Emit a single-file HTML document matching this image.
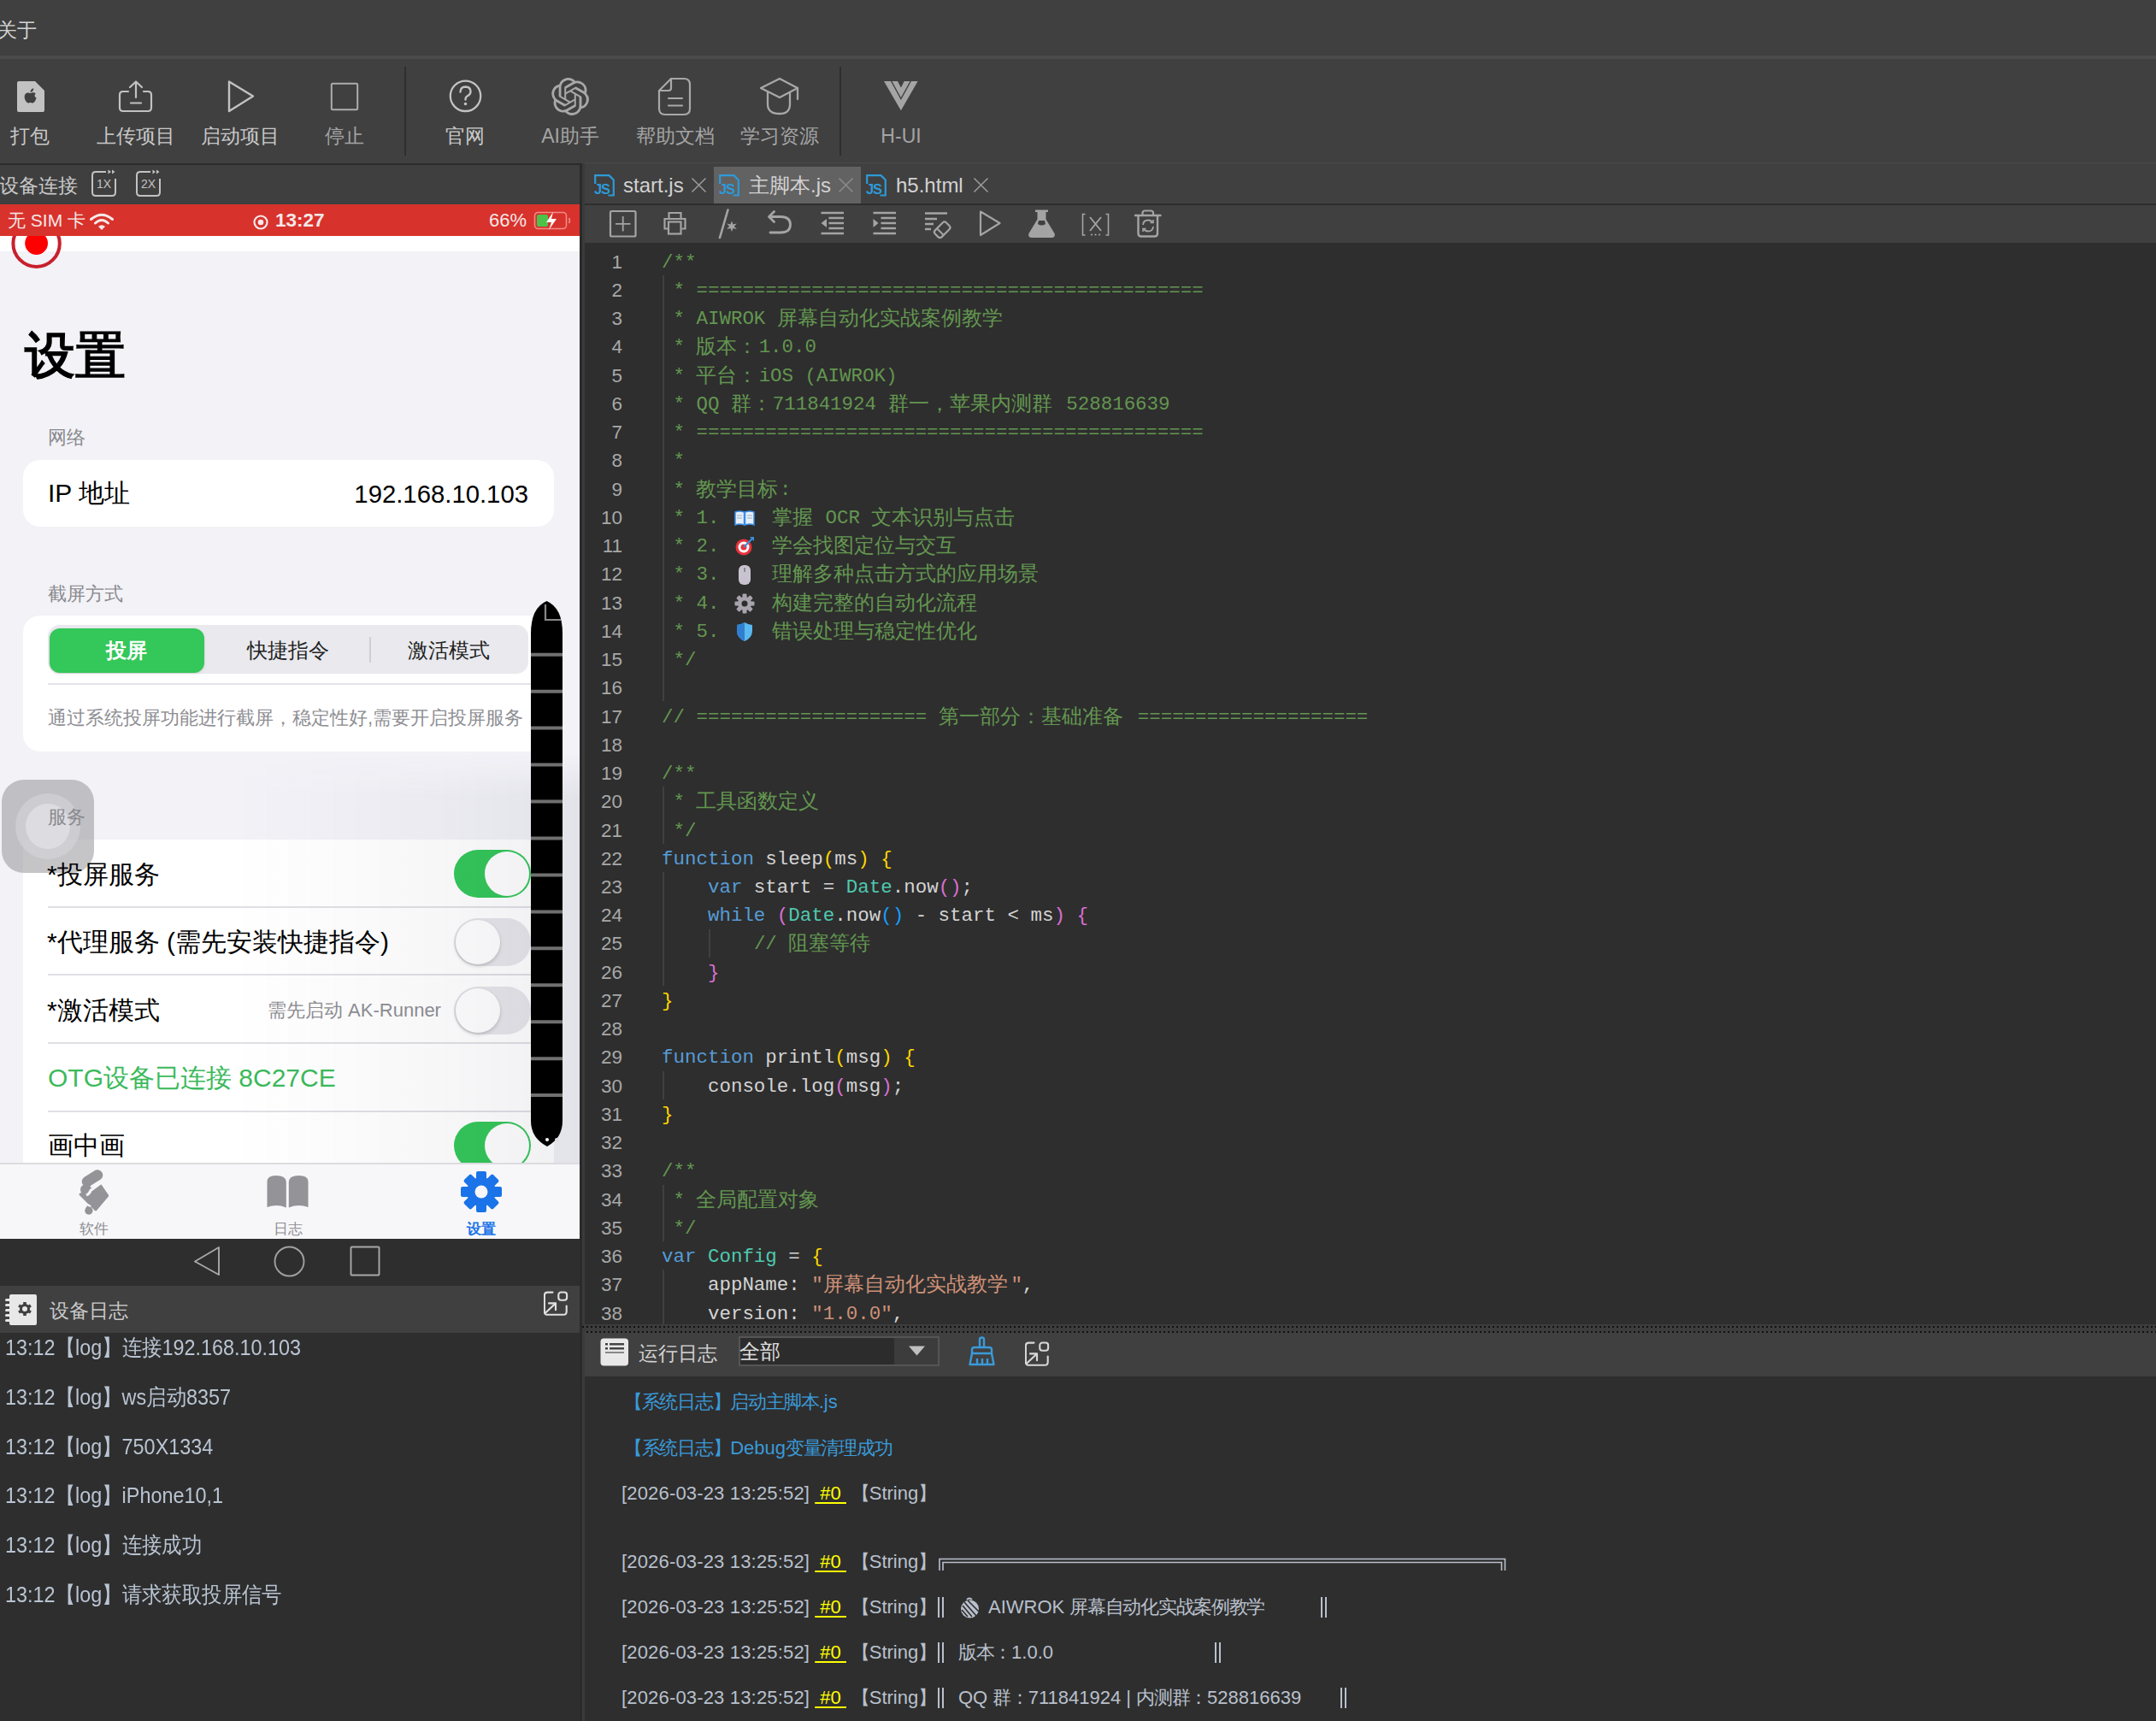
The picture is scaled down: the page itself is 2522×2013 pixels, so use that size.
<!DOCTYPE html>
<html><head><meta charset="utf-8">
<style>
*{margin:0;padding:0;box-sizing:border-box}
html,body{width:2522px;height:2013px;overflow:hidden;background:#404040;font-family:"Liberation Sans",sans-serif}
.a{position:absolute}
#menubar{left:0;top:0;width:2522px;height:65px;background:#404040}
#menuline{left:0;top:65px;width:2522px;height:4px;background:#4a4a4a}
#toolbar{left:0;top:69px;width:2522px;height:121px;background:#404040}
#lefthead{left:0;top:191px;width:681px;height:48px;background:#3f3f3f;border-top:2px solid #2b2b2b}
#phone{left:0;top:239px;width:678px;height:1210px;background:#f2f2f7;overflow:hidden}
#leftsep{left:678px;top:191px;width:3px;height:1822px;background:#2b2b2b}
#leftsep2{left:681px;top:191px;width:3px;height:1822px;background:#3a3a3a}
#navbar{left:0;top:1449px;width:678px;height:55px;background:#2e2e2e}
#devloghead{left:0;top:1504px;width:678px;height:55px;background:#404040}
#devlog{left:0;top:1559px;width:678px;height:454px;background:#2e2e2e}
#tabs{left:684px;top:190px;width:1838px;height:49px;background:#404040;border-top:1px solid #4a4a4a}
#edtool{left:684px;top:240px;width:1838px;height:44px;background:#404040}
#code{left:684px;top:284px;width:1838px;height:1265px;background:#2e2e2e;overflow:hidden}
#splitter{left:684px;top:1549px;width:1838px;height:9px;background:#3c3c3c}
#runhead{left:684px;top:1558px;width:1838px;height:52px;background:#404040}
#runlog{left:684px;top:1610px;width:1838px;height:403px;background:#2e2e2e}
.tl{top:144px;font-size:23px;line-height:30px;transform:translateX(-50%);white-space:nowrap}
.ps{left:56px;font-size:22px;line-height:30px;color:#8a8a8e}
.card{left:27px;width:621px;background:#fff;border-radius:20px}
.pt{font-size:30px;line-height:36px;color:#000;white-space:nowrap}
.sg{top:507px;font-size:24px;line-height:30px;color:#222;transform:translateX(-50%);white-space:nowrap;font-weight:500}
.sep{left:56px;width:600px;height:2px;background:#e0e0e4}
.sw{left:531px;width:90px;height:56px;border-radius:28px;background:#e6e6ea}
.sw i{position:absolute;left:2px;top:2px;width:52px;height:52px;border-radius:50%;background:#fff;box-shadow:0 2px 4px rgba(0,0,0,.18)}
.sw.on{background:#34c759}
.sw.on i{left:auto;right:2px;box-shadow:none}
.tb{top:1188px;font-size:17px;line-height:22px;color:#8e8e93;transform:translateX(-50%);white-space:nowrap}
.dl{left:6px;margin-top:-2px;font-size:26px;line-height:32px;color:#b9c4d2;white-space:nowrap;transform:scaleX(0.9);transform-origin:0 0}
.ln{position:absolute;left:0;width:44px;text-align:right;font-size:22.5px;line-height:33px;color:#a8a8a8;font-family:"Liberation Sans",sans-serif}
.cl{position:absolute;left:90px;white-space:pre;font-family:"Liberation Mono",monospace;font-size:22.47px;line-height:33px;height:33px}
.cl .w{display:inline-block;font-size:24px;line-height:33px;height:33px;vertical-align:top;white-space:pre;overflow:visible;letter-spacing:0}
.cm{color:#639650}.kw{color:#569cd6}.id{color:#d4d4d4}.ty{color:#4ec9b0}.st{color:#ce9178}.b1{color:#ffd700}.b2{color:#da70d6}.b3{color:#179fff}
.tt{top:201px;font-size:24px;line-height:32px;color:#d2d2d2;white-space:nowrap}
.rl{font-size:22px;line-height:30px;color:#b9c0cc;white-space:nowrap}
.cj{letter-spacing:-1.3px}
.ts{letter-spacing:0.17px}
.h0{color:#ffff00;text-decoration:underline;text-underline-offset:3px}
</style></head><body>
<div class="a" id="menubar"></div>
<div class="a" id="menuline"></div>
<div class="a" id="toolbar"></div>

<div class="a" style="left:-3px;top:20px;font-size:23px;line-height:30px;color:#d2d2d2">关于</div>
<!-- toolbar separators -->
<div class="a" style="left:473px;top:78px;width:2px;height:104px;background:#2e2e2e"></div>
<div class="a" style="left:982px;top:78px;width:2px;height:104px;background:#2e2e2e"></div>
<!-- labels -->
<div class="a tl" style="left:35px;color:#c8c8c8">打包</div>
<div class="a tl" style="left:159px;color:#c8c8c8">上传项目</div>
<div class="a tl" style="left:281px;color:#c8c8c8">启动项目</div>
<div class="a tl" style="left:403px;color:#a4a4a4">停止</div>
<div class="a tl" style="left:544px;color:#c8c8c8">官网</div>
<div class="a tl" style="left:667px;color:#a4a4a4">AI助手</div>
<div class="a tl" style="left:790px;color:#a4a4a4">帮助文档</div>
<div class="a tl" style="left:912px;color:#a4a4a4">学习资源</div>
<div class="a tl" style="left:1054px;color:#a4a4a4">H-UI</div>
<!-- icons -->
<svg class="a" style="left:18px;top:92px" width="36" height="40" viewBox="0 0 36 40">
 <path d="M4 3 H23 L34 14 V37 Q34 39 32 39 H4 Q2 39 2 37 V5 Q2 3 4 3 Z" fill="#c2c2c2"/>
 <path d="M17.4 17 C15.5 16 13.2 16.3 12 17.6 C10.3 19.4 10.2 22.7 11.6 25.2 C12.6 27 13.8 28.6 15.3 28.5 C16.3 28.4 16.6 27.9 17.6 27.9 C18.6 27.9 18.9 28.5 20 28.4 C21.5 28.4 22.7 26.7 23.5 25.2 C24 24.2 24.3 23.6 24.6 22.6 C22.5 21.8 21.8 18.9 23.8 17.6 C22.8 16.3 21.2 16 20 16.3 C19 16.5 18.2 17 17.4 17 Z" fill="#404040"/><path d="M17.5 15.8 C17.4 13.6 19.1 11.5 21.3 11.2 C21.5 13.5 19.6 15.7 17.5 15.8 Z" fill="#404040"/>
</svg>
<svg class="a" style="left:137px;top:93px" width="44" height="40" viewBox="0 0 44 40">
 <g fill="none" stroke="#c2c2c2" stroke-width="2.2" stroke-linecap="round" stroke-linejoin="round">
  <path d="M22 3 V21"/><path d="M15 9 L22 2.5 L29 9"/>
  <path d="M13 14 H7 Q3 14 3 18 V33 Q3 37 7 37 H36 Q40 37 40 33 V18 Q40 14 36 14 H31"/>
  <path d="M16 27.5 H28"/>
 </g>
</svg>
<svg class="a" style="left:263px;top:92px" width="38" height="42" viewBox="0 0 38 42">
 <path d="M5 3.5 L33 20.5 L5 38 Z" fill="none" stroke="#c2c2c2" stroke-width="2.4" stroke-linejoin="round"/>
</svg>
<svg class="a" style="left:385px;top:95px" width="36" height="36" viewBox="0 0 36 36">
 <rect x="2.8" y="2.8" width="30.4" height="30.4" rx="1.5" fill="none" stroke="#adadad" stroke-width="2"/>
</svg>
<svg class="a" style="left:523px;top:91px" width="44" height="43" viewBox="0 0 44 43">
 <circle cx="21.5" cy="21.3" r="17.7" fill="none" stroke="#c2c2c2" stroke-width="2.3"/>
 <path d="M15.5 16.5 Q15.8 10.5 21.5 10.5 Q27.5 10.8 27.5 16 Q27.5 19.5 23.5 21.5 Q21.5 22.5 21.5 25.5" fill="none" stroke="#c2c2c2" stroke-width="2.4" stroke-linecap="round"/>
 <circle cx="21.5" cy="30.5" r="1.8" fill="#c2c2c2"/>
</svg>
<svg class="a" style="left:645px;top:91px" width="44" height="44" viewBox="0 0 24 24"><path fill="#a8a8a8" d="M22.2819 9.8211a5.9847 5.9847 0 0 0-.5157-4.9108 6.0462 6.0462 0 0 0-6.5098-2.9A6.0651 6.0651 0 0 0 4.9807 4.1818a5.9847 5.9847 0 0 0-3.9977 2.9 6.0462 6.0462 0 0 0 .7427 7.0966 5.98 5.98 0 0 0 .511 4.9107 6.051 6.051 0 0 0 6.5146 2.9001A5.9847 5.9847 0 0 0 13.2599 24a6.0557 6.0557 0 0 0 5.7718-4.2058 5.9894 5.9894 0 0 0 3.9977-2.9001 6.0557 6.0557 0 0 0-.7475-7.0729zm-9.022 12.6081a4.4755 4.4755 0 0 1-2.8764-1.0408l.1419-.0804 4.7783-2.7582a.7948.7948 0 0 0 .3927-.6813v-6.7369l2.02 1.1686a.071.071 0 0 1 .038.052v5.5826a4.504 4.504 0 0 1-4.4945 4.4944zm-9.6607-4.1254a4.4708 4.4708 0 0 1-.5346-3.0137l.142.0852 4.783 2.7582a.7712.7712 0 0 0 .7806 0l5.8428-3.3685v2.3324a.0804.0804 0 0 1-.0332.0615L9.74 19.9502a4.4992 4.4992 0 0 1-6.1408-1.6464zM2.3408 7.8956a4.485 4.485 0 0 1 2.3655-1.9728V11.6a.7664.7664 0 0 0 .3879.6765l5.8144 3.3543-2.0201 1.1685a.0757.0757 0 0 1-.071 0l-4.8303-2.7865A4.504 4.504 0 0 1 2.3408 7.872zm16.5963 3.8558L13.1038 8.364 15.1192 7.2a.0757.0757 0 0 1 .071 0l4.8303 2.7913a4.4944 4.4944 0 0 1-.6765 8.1042v-5.6772a.79.79 0 0 0-.407-.667zm2.0107-3.0231l-.142-.0852-4.7735-2.7818a.7759.7759 0 0 0-.7854 0L9.409 9.2297V6.8974a.0662.0662 0 0 1 .0284-.0615l4.8303-2.7866a4.4992 4.4992 0 0 1 6.6802 4.66zM8.3065 12.863l-2.02-1.1638a.0804.0804 0 0 1-.038-.0567V6.0742a4.4992 4.4992 0 0 1 7.3757-3.4537l-.142.0805L8.704 5.459a.7948.7948 0 0 0-.3927.6813zm1.0976-2.3654l2.602-1.4998 2.6069 1.4998v2.9994l-2.5974 1.4997-2.6067-1.4997Z"/></svg>
<svg class="a" style="left:768px;top:89px" width="42" height="48" viewBox="0 0 42 48">
 <g fill="none" stroke="#a8a8a8" stroke-width="2.2" stroke-linejoin="round" stroke-linecap="round">
  <path d="M17 3 H32 Q39 3 39 10 V38 Q39 45 32 45 H10 Q3 45 3 38 V17 Z"/>
  <path d="M17 3 V14 Q17 17 14 17 H3"/>
  <path d="M14 26 H30"/><path d="M14 34.5 H30"/>
 </g>
</svg>
<svg class="a" style="left:886px;top:89px" width="52" height="48" viewBox="0 0 52 48">
 <g fill="none" stroke="#a8a8a8" stroke-width="2.3" stroke-linejoin="round" stroke-linecap="round">
  <path d="M26 3 L47 14 L26 25 L4 14 Z"/>
  <path d="M12 19 V33 Q12 44 26 44 Q38 44 38 33 V19"/>
  <path d="M47 14 V27"/>
 </g>
</svg>
<svg class="a" style="left:1032px;top:93px" width="44" height="40" viewBox="0 0 44 40"><path d="M2 2 H41.6 L21.9 36.2 Z" fill="#a4a4a4"/><path d="M10.4 1.5 L21.9 22.5 L33.5 1.5" fill="none" stroke="#404040" stroke-width="1.4"/><path d="M17.7 1.5 H26 L21.9 9.5 Z" fill="#404040"/></svg>
<div class="a" id="lefthead"></div>
<div class="a" id="phone">
 <div class="a" style="left:0;top:37px;width:678px;height:18px;background:#fff"></div>
 <svg class="a" style="left:0;top:0" width="100" height="90"><circle cx="42.6" cy="45.7" r="27.2" fill="none" stroke="#c8202c" stroke-width="4"/><circle cx="42.6" cy="45.6" r="13.4" fill="#f00"/></svg>
 <div class="a" style="left:0;top:0;width:678px;height:37px;background:#d8322c"></div>
 <div class="a" style="left:9px;top:5px;font-size:21px;line-height:28px;color:#f6e8e8">无 SIM 卡</div>
 <svg class="a" style="left:104px;top:10px" width="30" height="22" viewBox="0 0 30 22"><g fill="none" stroke="#f6e8e8" stroke-width="3" stroke-linecap="round"><path d="M2.5 7.5 Q15 -3 27.5 7.5"/><path d="M7.5 12 Q15 5 22.5 12"/></g><path d="M11 16 Q15 12.5 19 16 L15 20 Z" fill="#f6e8e8"/></svg>
 <svg class="a" style="left:294px;top:10px" width="22" height="22"><circle cx="11" cy="11" r="7.5" fill="none" stroke="#f6e8e8" stroke-width="2.2"/><circle cx="11" cy="11" r="3.3" fill="#f6e8e8"/></svg>
 <div class="a" style="left:322px;top:5px;font-size:22.5px;line-height:28px;color:#f6e8e8;font-weight:bold">13:27</div>
 <div class="a" style="left:572px;top:5px;font-size:22px;line-height:28px;color:#f6e8e8">66%</div>
 <svg class="a" style="left:624px;top:8px" width="48" height="24" viewBox="0 0 48 24"><rect x="1.5" y="1.5" width="37" height="19" rx="4" fill="none" stroke="#f08a86" stroke-width="1.6"/><rect x="4" y="4" width="13" height="14" rx="2" fill="#4cc24a"/><path d="M41.5 8 Q43.5 11 41.5 14" fill="none" stroke="#f08a86" stroke-width="1.6"/><path d="M23 1 L15 13 H21 L18 22 L27 9 H21 Z" fill="#fff"/></svg>

 <div class="a" style="left:29px;top:142px;font-size:59px;line-height:70px;font-weight:bold;color:#000">设置</div>
 <div class="a ps" style="top:258px">网络</div>
 <div class="a card" style="top:299px;height:78px"></div>
 <div class="a pt" style="left:56px;top:320px">IP 地址</div>
 <div class="a pt" style="right:60px;top:321px;font-size:29.3px">192.168.10.103</div>
 <div class="a ps" style="top:441px">截屏方式</div>
 <div class="a card" style="top:481px;height:159px"></div>
 <div class="a" style="left:56px;top:492px;width:562px;height:57px;background:#e9e9ee;border-radius:14px"></div>
 <div class="a" style="left:58px;top:496px;width:181px;height:52px;background:#34c759;border-radius:12px;box-shadow:0 1px 3px rgba(0,0,0,.12)"></div>
 <div class="a" style="left:432px;top:506px;width:2px;height:30px;background:#d0d0d4"></div>
 <div class="a sg" style="left:148px;color:#fff;font-weight:bold">投屏</div>
 <div class="a sg" style="left:337px">快捷指令</div>
 <div class="a sg" style="left:525px">激活模式</div>
 <div class="a" style="left:56px;top:560px;width:590px;height:2px;background:#e4e4e8"></div>
 <div class="a" style="left:56px;top:586px;font-size:22px;line-height:30px;color:#8e8e93;white-space:nowrap">通过系统投屏功能进行截屏，稳定性好,需要开启投屏服务</div>
  <div class="a card" style="top:743px;height:640px;border-radius:0 0 0 0"></div>
 <!-- assistive touch -->
 <div class="a" style="left:2px;top:673px;width:108px;height:109px;border-radius:26px;background:rgba(150,150,155,.55)"></div>
 <div class="a" style="left:18px;top:689px;width:76px;height:77px;border-radius:50%;background:rgba(215,215,220,.55)"></div>
 <div class="a" style="left:30px;top:701px;width:52px;height:53px;border-radius:50%;background:rgba(230,230,235,.6)"></div>

 <div class="a ps" style="top:702px">服务</div>
 <div class="a pt" style="left:55px;top:766px">*投屏服务</div>
 <div class="a sw on" style="top:755px"><i></i></div>
 <div class="a sep" style="top:821px"></div>
 <div class="a pt" style="left:55px;top:845px">*代理服务 (需先安装快捷指令)</div>
 <div class="a sw" style="top:835px"><i></i></div>
 <div class="a sep" style="top:900px"></div>
 <div class="a pt" style="left:55px;top:925px">*激活模式</div>
 <div class="a" style="left:313px;top:757px;font-size:22px;line-height:30px;color:#8e8e93;top:928px">需先启动 AK-Runner</div>
 <div class="a sw" style="top:915px"><i></i></div>
 <div class="a sep" style="top:980px"></div>
 <div class="a pt" style="left:56px;top:1004px;color:#3cba5c">OTG设备已连接 8C27CE</div>
 <div class="a sep" style="top:1060px"></div>
 <div class="a pt" style="left:56px;top:1083px">画中画</div>
 <div class="a sw on" style="top:1073px"><i></i></div>

<div class="a" style="left:0;top:642px;width:678px;height:479px;background:linear-gradient(90deg,rgba(40,40,70,0) 0%,rgba(40,40,70,0) 40%,rgba(40,40,70,0.035) 75%,rgba(40,40,70,0.07) 100%);-webkit-mask-image:linear-gradient(180deg,transparent 0,#000 50px);mask-image:linear-gradient(180deg,transparent 0,#000 50px)"></div>
 <!-- black scroller -->
 <svg class="a" style="left:618px;top:462px" width="44" height="642" viewBox="0 0 44 642">
  <path d="M3 40 Q3 10 21.5 2 Q40 10 40 40 V610 Q40 630 22 640 Q3 630 3 610 Z" fill="#000"/>
  <path d="M20 6 V24 H38" fill="none" stroke="#888" stroke-width="2.2"/>
  <g stroke="#707070" stroke-width="4"><path d="M3 64.7 H40"/><path d="M3 107.7 H40"/><path d="M3 150.6 H40"/><path d="M3 193.6 H40"/><path d="M3 236.5 H40"/><path d="M3 279.4 H40"/><path d="M3 322.4 H40"/><path d="M3 365.4 H40"/><path d="M3 408.3 H40"/><path d="M3 451.2 H40"/><path d="M3 494.2 H40"/><path d="M3 537.2 H40"/><path d="M3 580.1 H40"/></g>
  <circle cx="22" cy="632" r="2" fill="#fff"/><circle cx="33" cy="632" r="2" fill="#ddd"/>
 </svg>

 <!-- tab bar -->
 <div class="a" style="left:0;top:1121px;width:678px;height:89px;background:#f7f7f9;border-top:2px solid #dcdce0"></div>
 <svg class="a" style="left:84px;top:1127px" width="50" height="56" viewBox="0 0 50 56">
 <g fill="#939398">
  <path d="M18 16 L30 8.5" stroke="#939398" stroke-width="12.5" stroke-linecap="round"/>
  <path d="M33.5 20.6 L41.7 32.5 L28 48.9 L10 31 Z" stroke="#939398" stroke-width="3" stroke-linejoin="round"/>
  <circle cx="16.5" cy="25.5" r="6.5"/>
  <path d="M19.5 42.6 Q24.6 48 24.6 50 A4.7 4.7 0 0 1 15.2 50 Q15.2 48 19.5 42.6 Z"/>
 </g>
 <path d="M17 32 Q21 30 22 26.5 L35 17" fill="none" stroke="#f7f7f9" stroke-width="3"/>
 <path d="M16 42 L22 45" fill="none" stroke="#f7f7f9" stroke-width="2.5"/>
</svg>
 <svg class="a" style="left:311px;top:1135px" width="52" height="40" viewBox="0 0 52 40"><g fill="#939398"><path d="M1.5 8 Q1.5 1 12 1 Q23 1 23.8 8 V38.5 Q13 34 1.5 38 Z"/><path d="M26.8 8 Q27.5 1 38.5 1 Q49.5 1 49.5 8 V38 Q38 34 26.8 38.5 Z"/></g></svg>
 <svg class="a" style="left:538px;top:1130px" width="50" height="50" viewBox="-25 -25 50 50"><g fill="#1a73e8"><rect x="-6" y="-24" width="12" height="12" rx="2" transform="rotate(0)"/><rect x="-6" y="-24" width="12" height="12" rx="2" transform="rotate(45)"/><rect x="-6" y="-24" width="12" height="12" rx="2" transform="rotate(90)"/><rect x="-6" y="-24" width="12" height="12" rx="2" transform="rotate(135)"/><rect x="-6" y="-24" width="12" height="12" rx="2" transform="rotate(180)"/><rect x="-6" y="-24" width="12" height="12" rx="2" transform="rotate(225)"/><rect x="-6" y="-24" width="12" height="12" rx="2" transform="rotate(270)"/><rect x="-6" y="-24" width="12" height="12" rx="2" transform="rotate(315)"/><circle r="17"/></g><circle r="7.5" fill="#f7f7f9"/></svg>
 <div class="a tb" style="left:110px">软件</div>
 <div class="a tb" style="left:337px">日志</div>
 <div class="a tb" style="left:563px;color:#1a73e8;font-weight:bold">设置</div>
</div>

<div class="a" id="leftsep"></div>
<div class="a" id="leftsep2"></div>
<div class="a" id="navbar"></div>
<div class="a" id="devloghead"></div>
<div class="a" id="devlog"></div>
<div class="a" style="left:-1px;top:202px;font-size:23px;line-height:30px;color:#c8c8c8">设备连接</div>
<svg class="a" style="left:106px;top:198px" width="32" height="33" viewBox="0 0 32 33"><g fill="none" stroke="#c2c2c2" stroke-width="2"><path d="M18 3 H6 Q2 3 2 7 V27 Q2 31 6 31 H25 Q29 31 29 27 V11"/></g><path d="M20.5 0.5 L24 3 L20.5 5.5 Z M25 0.5 L28.5 3 L25 5.5 Z" fill="#c2c2c2"/><text x="15.5" y="21.5" font-size="14" fill="#c2c2c2" text-anchor="middle" font-family="Liberation Sans">1X</text></svg><svg class="a" style="left:158px;top:198px" width="32" height="33" viewBox="0 0 32 33"><g fill="none" stroke="#c2c2c2" stroke-width="2"><path d="M18 3 H6 Q2 3 2 7 V27 Q2 31 6 31 H25 Q29 31 29 27 V11"/></g><path d="M20.5 0.5 L24 3 L20.5 5.5 Z M25 0.5 L28.5 3 L25 5.5 Z" fill="#c2c2c2"/><text x="15.5" y="21.5" font-size="14" fill="#c2c2c2" text-anchor="middle" font-family="Liberation Sans">2X</text></svg>
<!-- android nav -->
<svg class="a" style="left:220px;top:1452px" width="240" height="46" viewBox="0 0 240 46">
 <path d="M36 7 L8 23.5 L36 39 Z" fill="none" stroke="#a8a8a8" stroke-width="1.9" stroke-linejoin="round"/>
 <circle cx="118.5" cy="23.5" r="17" fill="none" stroke="#a0a0a0" stroke-width="1.9"/>
 <rect x="190.5" y="6.5" width="33" height="33" rx="1" fill="none" stroke="#a8a8a8" stroke-width="1.9"/>
</svg>
<!-- device log header -->
<svg class="a" style="left:5px;top:1513px" width="40" height="38" viewBox="0 0 40 38">
 <rect x="6" y="1" width="32" height="36" rx="2" fill="#e8e8e8"/>
 <g fill="#e8e8e8"><rect x="1" y="6" width="8" height="3" rx="1.5"/><rect x="1" y="12" width="8" height="3" rx="1.5"/><rect x="1" y="18" width="8" height="3" rx="1.5"/><rect x="1" y="24" width="8" height="3" rx="1.5"/><rect x="1" y="30" width="8" height="3" rx="1.5"/></g>
 <g transform="translate(24 18)" fill="#404040"><circle r="6"/><rect x="-1.8" y="-8" width="3.6" height="4" transform="rotate(0)"/><rect x="-1.8" y="-8" width="3.6" height="4" transform="rotate(60)"/><rect x="-1.8" y="-8" width="3.6" height="4" transform="rotate(120)"/><rect x="-1.8" y="-8" width="3.6" height="4" transform="rotate(180)"/><rect x="-1.8" y="-8" width="3.6" height="4" transform="rotate(240)"/><rect x="-1.8" y="-8" width="3.6" height="4" transform="rotate(300)"/></g>
 <circle cx="24" cy="18" r="3" fill="#e8e8e8"/>
</svg>
<div class="a" style="left:58px;top:1517px;font-size:23px;line-height:32px;color:#c8c8c8">设备日志</div>
<svg class="a" style="left:636px;top:1510px" width="30" height="30" viewBox="0 0 30 30"><g fill="none" stroke="#e0e0e0" stroke-width="2.1" stroke-linecap="round" stroke-linejoin="round"><path d="M10.5 1.6 H4.5 Q0.9 1.6 0.9 5.2 V24.2 Q0.9 27.8 4.5 27.8 H23 Q26.7 27.8 26.7 24.2 V17.6"/><rect x="17.3" y="1.5" width="9.8" height="9.2" rx="3"/><path d="M1.6 26.1 L14 14.4 M6 14.4 H14 V22.3"/></g></svg>
<div class="a dl" style="top:1562.0px">13:12【log】连接192.168.10.103</div>
<div class="a dl" style="top:1619.8px">13:12【log】ws启动8357</div>
<div class="a dl" style="top:1677.6px">13:12【log】750X1334</div>
<div class="a dl" style="top:1735.4px">13:12【log】iPhone10,1</div>
<div class="a dl" style="top:1793.2px">13:12【log】连接成功</div>
<div class="a dl" style="top:1851.0px">13:12【log】请求获取投屏信号</div>
<div class="a" id="tabs"></div>
<div class="a" id="edtool"></div>
<div class="a" id="code">
<div class="ln" style="top:5.70px">1</div><div class="cl" style="top:6.70px"><span class="cm">/**</span></div>
<div class="ln" style="top:38.94px">2</div><div class="cl" style="top:39.94px"><span class="cm"> * ============================================</span></div>
<div class="ln" style="top:72.18px">3</div><div class="cl" style="top:73.18px"><span class="cm"> * AIWROK <span class="w" style="width:268.4px">屏幕自动化实战案例教学</span></span></div>
<div class="ln" style="top:105.42px">4</div><div class="cl" style="top:106.42px"><span class="cm"> * <span class="w" style="width:73.2px">版本：</span>1.0.0</span></div>
<div class="ln" style="top:138.66px">5</div><div class="cl" style="top:139.66px"><span class="cm"> * <span class="w" style="width:73.2px">平台：</span>iOS (AIWROK)</span></div>
<div class="ln" style="top:171.90px">6</div><div class="cl" style="top:172.90px"><span class="cm"> * QQ <span class="w" style="width:48.8px">群：</span>711841924 <span class="w" style="width:195.2px">群一，苹果内测群</span> 528816639</span></div>
<div class="ln" style="top:205.14px">7</div><div class="cl" style="top:206.14px"><span class="cm"> * ============================================</span></div>
<div class="ln" style="top:238.38px">8</div><div class="cl" style="top:239.38px"><span class="cm"> *</span></div>
<div class="ln" style="top:271.62px">9</div><div class="cl" style="top:272.62px"><span class="cm"> * <span class="w" style="width:97.6px">教学目标</span>:</span></div>
<div class="ln" style="top:304.86px">10</div><div class="cl" style="top:305.86px"><span class="cm"> * 1. </span><span class="w" style="width:34.8px;padding-left:4px"><svg width="24" height="20" viewBox="0 0 24 20" style="vertical-align:-3px"><path d="M1 3 Q6 1 11.5 3 V18 Q6 16 1 18 Z" fill="#e8f0fb" stroke="#3a8ee6" stroke-width="1.5"/><path d="M12.5 3 Q18 1 23 3 V18 Q18 16 12.5 18 Z" fill="#e8f0fb" stroke="#3a8ee6" stroke-width="1.5"/><path d="M3 7 H9 M3 10 H9 M15 7 H21 M15 10 H21" stroke="#9ab" stroke-width="1"/></svg></span><span class="cm"> <span class="w" style="width:48.8px">掌握</span> OCR <span class="w" style="width:170.8px">文本识别与点击</span></span></div>
<div class="ln" style="top:338.10px">11</div><div class="cl" style="top:339.10px"><span class="cm"> * 2. </span><span class="w" style="width:34.8px;padding-left:4px"><svg width="24" height="24" viewBox="0 0 24 24" style="vertical-align:-5px"><circle cx="11" cy="13" r="9.5" fill="#e8323c"/><circle cx="11" cy="13" r="6.5" fill="#fff"/><circle cx="11" cy="13" r="3.5" fill="#e8323c"/><path d="M11 13 L21 3" stroke="#3c8fd8" stroke-width="2.2"/><path d="M18 1 L23 1 L23 6" fill="#3c8fd8"/></svg></span><span class="cm"> <span class="w" style="width:219.6px">学会找图定位与交互</span></span></div>
<div class="ln" style="top:371.34px">12</div><div class="cl" style="top:372.34px"><span class="cm"> * 3. </span><span class="w" style="width:34.8px;padding-left:4px"><svg width="24" height="24" viewBox="0 0 24 24" style="vertical-align:-5px"><rect x="5" y="1" width="14" height="23" rx="6" fill="#c9c3cf"/><path d="M12 4 V9" stroke="#777" stroke-width="1.5"/></svg></span><span class="cm"> <span class="w" style="width:317.2px">理解多种点击方式的应用场景</span></span></div>
<div class="ln" style="top:404.58px">13</div><div class="cl" style="top:405.58px"><span class="cm"> * 4. </span><span class="w" style="width:34.8px;padding-left:4px"><svg width="24" height="24" viewBox="-12 -12 24 24" style="vertical-align:-5px"><g fill="#a9a3ad"><rect x="-2.5" y="-11.5" width="5" height="6" rx="1" transform="rotate(0)"/><rect x="-2.5" y="-11.5" width="5" height="6" rx="1" transform="rotate(45)"/><rect x="-2.5" y="-11.5" width="5" height="6" rx="1" transform="rotate(90)"/><rect x="-2.5" y="-11.5" width="5" height="6" rx="1" transform="rotate(135)"/><rect x="-2.5" y="-11.5" width="5" height="6" rx="1" transform="rotate(180)"/><rect x="-2.5" y="-11.5" width="5" height="6" rx="1" transform="rotate(225)"/><rect x="-2.5" y="-11.5" width="5" height="6" rx="1" transform="rotate(270)"/><rect x="-2.5" y="-11.5" width="5" height="6" rx="1" transform="rotate(315)"/><circle r="8"/></g><circle r="3.5" fill="#2d2d2d"/></svg></span><span class="cm"> <span class="w" style="width:244.0px">构建完整的自动化流程</span></span></div>
<div class="ln" style="top:437.82px">14</div><div class="cl" style="top:438.82px"><span class="cm"> * 5. </span><span class="w" style="width:34.8px;padding-left:4px"><svg width="24" height="24" viewBox="0 0 24 24" style="vertical-align:-5px"><path d="M12 1 Q17 4 21 4 V11 Q21 19 12 23 Q3 19 3 11 V4 Q7 4 12 1 Z" fill="#5ab8f0"/><path d="M12 1 V23 Q3 19 3 11 V4 Q7 4 12 1 Z" fill="#2f7fd0"/></svg></span><span class="cm"> <span class="w" style="width:244.0px">错误处理与稳定性优化</span></span></div>
<div class="ln" style="top:471.06px">15</div><div class="cl" style="top:472.06px"><span class="cm"> */</span></div>
<div class="ln" style="top:504.30px">16</div><div class="cl" style="top:505.30px"></div>
<div class="ln" style="top:537.54px">17</div><div class="cl" style="top:538.54px"><span class="cm">// ==================== <span class="w" style="width:219.6px">第一部分：基础准备</span> ====================</span></div>
<div class="ln" style="top:570.78px">18</div><div class="cl" style="top:571.78px"></div>
<div class="ln" style="top:604.02px">19</div><div class="cl" style="top:605.02px"><span class="cm">/**</span></div>
<div class="ln" style="top:637.26px">20</div><div class="cl" style="top:638.26px"><span class="cm"> * <span class="w" style="width:146.4px">工具函数定义</span></span></div>
<div class="ln" style="top:670.50px">21</div><div class="cl" style="top:671.50px"><span class="cm"> */</span></div>
<div class="ln" style="top:703.74px">22</div><div class="cl" style="top:704.74px"><span class="kw">function</span><span class="id"> sleep</span><span class="b1">(</span><span class="id">ms</span><span class="b1">)</span><span class="id"> </span><span class="b1">{</span></div>
<div class="ln" style="top:736.98px">23</div><div class="cl" style="top:737.98px"><span class="id">    </span><span class="kw">var</span><span class="id"> start = </span><span class="ty">Date</span><span class="id">.now</span><span class="b2">()</span><span class="id">;</span></div>
<div class="ln" style="top:770.22px">24</div><div class="cl" style="top:771.22px"><span class="id">    </span><span class="kw">while</span><span class="id"> </span><span class="b2">(</span><span class="ty">Date</span><span class="id">.now</span><span class="b3">()</span><span class="id"> - start &lt; ms</span><span class="b2">)</span><span class="id"> </span><span class="b2">{</span></div>
<div class="ln" style="top:803.46px">25</div><div class="cl" style="top:804.46px"><span class="id">        </span><span class="cm">// <span class="w" style="width:97.6px">阻塞等待</span></span></div>
<div class="ln" style="top:836.70px">26</div><div class="cl" style="top:837.70px"><span class="id">    </span><span class="b2">}</span></div>
<div class="ln" style="top:869.94px">27</div><div class="cl" style="top:870.94px"><span class="b1">}</span></div>
<div class="ln" style="top:903.18px">28</div><div class="cl" style="top:904.18px"></div>
<div class="ln" style="top:936.42px">29</div><div class="cl" style="top:937.42px"><span class="kw">function</span><span class="id"> printl</span><span class="b1">(</span><span class="id">msg</span><span class="b1">)</span><span class="id"> </span><span class="b1">{</span></div>
<div class="ln" style="top:969.66px">30</div><div class="cl" style="top:970.66px"><span class="id">    console.log</span><span class="b2">(</span><span class="id">msg</span><span class="b2">)</span><span class="id">;</span></div>
<div class="ln" style="top:1002.90px">31</div><div class="cl" style="top:1003.90px"><span class="b1">}</span></div>
<div class="ln" style="top:1036.14px">32</div><div class="cl" style="top:1037.14px"></div>
<div class="ln" style="top:1069.38px">33</div><div class="cl" style="top:1070.38px"><span class="cm">/**</span></div>
<div class="ln" style="top:1102.62px">34</div><div class="cl" style="top:1103.62px"><span class="cm"> * <span class="w" style="width:146.4px">全局配置对象</span></span></div>
<div class="ln" style="top:1135.86px">35</div><div class="cl" style="top:1136.86px"><span class="cm"> */</span></div>
<div class="ln" style="top:1169.10px">36</div><div class="cl" style="top:1170.10px"><span class="kw">var</span><span class="id"> </span><span class="ty">Config</span><span class="id"> = </span><span class="b1">{</span></div>
<div class="ln" style="top:1202.34px">37</div><div class="cl" style="top:1203.34px"><span class="id">    appName: </span><span class="st">&quot;<span class="w" style="width:219.6px">屏幕自动化实战教学</span>&quot;</span><span class="id">,</span></div>
<div class="ln" style="top:1235.58px">38</div><div class="cl" style="top:1236.58px"><span class="id">    version: </span><span class="st">&quot;1.0.0&quot;</span><span class="id">,</span></div>
<div class="a" style="left:91.0px;top:37.9px;width:2px;height:498.6px;background:#404040"></div><div class="a" style="left:91.0px;top:636.3px;width:2px;height:66.5px;background:#404040"></div><div class="a" style="left:91.0px;top:736.0px;width:2px;height:133.0px;background:#404040"></div><div class="a" style="left:144.9px;top:802.5px;width:2px;height:33.2px;background:#404040"></div><div class="a" style="left:91.0px;top:968.7px;width:2px;height:33.2px;background:#404040"></div><div class="a" style="left:91.0px;top:1101.6px;width:2px;height:66.5px;background:#404040"></div><div class="a" style="left:91.0px;top:1201.3px;width:2px;height:66.5px;background:#404040"></div></div>
<div class="a" id="splitter"></div>
<div class="a" id="runhead"></div>
<div class="a" id="runlog"></div>

<div class="a" style="left:835px;top:195px;width:172px;height:44px;background:#626262"></div>
<div class="a" style="left:684px;top:238px;width:1838px;height:2px;background:#2e2e2e"></div>
<svg class="a" style="left:695px;top:204px" width="25" height="26" viewBox="0 0 25 26"><path d="M1.2 11 V1.2 H17.5 L22.8 6.5 V24.5 H16.5" fill="none" stroke="#2d9ad8" stroke-width="2.2"/><text x="0" y="23" font-size="16.5" font-weight="bold" fill="#2d9ad8" font-family="Liberation Sans" letter-spacing="-1.2">JS</text></svg>
<div class="a tt" style="left:729px">start.js</div>
<svg class="a" style="left:808px;top:207px" width="19" height="19" viewBox="0 0 19 19"><path d="M1.5 1.5 L17.5 17.5 M17.5 1.5 L1.5 17.5" stroke="#9a9a9a" stroke-width="1.6"/></svg>
<svg class="a" style="left:841px;top:204px" width="25" height="26" viewBox="0 0 25 26"><path d="M1.2 11 V1.2 H17.5 L22.8 6.5 V24.5 H16.5" fill="none" stroke="#2d9ad8" stroke-width="2.2"/><text x="0" y="23" font-size="16.5" font-weight="bold" fill="#2d9ad8" font-family="Liberation Sans" letter-spacing="-1.2">JS</text></svg>
<div class="a tt" style="left:876px">主脚本.js</div>
<svg class="a" style="left:980px;top:207px" width="19" height="19" viewBox="0 0 19 19"><path d="M1.5 1.5 L17.5 17.5 M17.5 1.5 L1.5 17.5" stroke="#8a8a8a" stroke-width="1.6"/></svg>
<svg class="a" style="left:1013px;top:204px" width="25" height="26" viewBox="0 0 25 26"><path d="M1.2 11 V1.2 H17.5 L22.8 6.5 V24.5 H16.5" fill="none" stroke="#2d9ad8" stroke-width="2.2"/><text x="0" y="23" font-size="16.5" font-weight="bold" fill="#2d9ad8" font-family="Liberation Sans" letter-spacing="-1.2">JS</text></svg>
<div class="a tt" style="left:1048px">h5.html</div>
<svg class="a" style="left:1138px;top:207px" width="19" height="19" viewBox="0 0 19 19"><path d="M1.5 1.5 L17.5 17.5 M17.5 1.5 L1.5 17.5" stroke="#9a9a9a" stroke-width="1.6"/></svg>

<svg class="a" style="left:700px;top:240px" width="680" height="44" viewBox="700 240 680 44">
 <g fill="none" stroke="#a4a4a4" stroke-width="2.2">
  <rect x="714" y="247" width="29.5" height="29.5" rx="1.5"/>
  <path d="M728.7 253 V270.5 M720 261.8 H737.5" stroke-width="1.8"/>
  <!-- printer -->
  <path d="M782.5 255 V249 H796.5 V255"/>
  <path d="M781.5 267.5 H777.5 V256 H801.5 V267.5 H797.5"/>
  <rect x="782" y="259.5" width="14.5" height="14"/>
  <!-- /* -->
  <path d="M851.5 245.5 L842 278" stroke-linecap="round" stroke-width="2.6"/>
  <!-- undo -->
  <path d="M900.5 253.5 H913 Q924.5 253.5 924.5 262.5 Q924.5 272 913 272 H901" stroke-width="2.8" stroke-linecap="round"/>
  <path d="M905.5 247.5 L899.5 253.5 L905.5 259.5" stroke-width="2.8" stroke-linecap="round" stroke-linejoin="round"/>
  <!-- outdent -->
  <path d="M960.5 249 H987 M969.5 255 H987 M969.5 261 H987 M969.5 267 H987 M960.5 273 H987" stroke-width="2.4"/>
  <!-- indent -->
  <path d="M1021.5 249 H1048 M1030.5 255 H1048 M1030.5 261 H1048 M1030.5 267 H1048 M1021.5 273 H1048" stroke-width="2.4"/>
  <!-- format -->
  <path d="M1082 249.5 H1108 M1082 256 H1096 M1082 262 H1092 M1082 268 H1089" stroke-width="2.4"/>
  <!-- play -->
  <path d="M1147 247.5 L1169.5 261 L1147 275 Z" stroke-width="2.2" stroke-linejoin="round"/>
  <!-- [x] -->
  <path d="M1269.5 250.5 H1266.5 V275 H1269.5 M1293.5 250.5 H1296.5 V275 H1293.5" stroke-width="1.6"/>
  <path d="M1275 254 L1288 270 M1288 254 L1275 270" stroke-width="1.8"/>
  <!-- trash -->
  <path d="M1328 252 H1357.5" stroke-width="2.4" stroke-linecap="round"/>
  <path d="M1336.5 251 V249 Q1336.5 246.5 1339.5 246.5 H1346 Q1349 246.5 1349 249 V251" stroke-width="2.2"/>
  <path d="M1331.5 253 V273 Q1331.5 276.5 1335 276.5 H1350.5 Q1354 276.5 1354 273 V253" stroke-width="2.4"/>
  <path d="M1337 263 Q1337.5 257.5 1343 257.5 Q1346.5 257.5 1348 260 M1349 265 Q1348.5 270.5 1343 270.5 Q1339.5 270.5 1338 268" stroke-width="1.8"/>
  <path d="M1345.5 260.5 H1349 V257 M1340.5 267.5 H1337 V271" stroke-width="1.6"/>
  <g transform="rotate(-45 1102 269)"><rect x="1093" y="263.5" width="18.5" height="11" rx="3" stroke-width="2.2"/><path d="M1099 263.5 V274.5" stroke-width="2"/></g>
 </g>
 <g fill="#a4a4a4">
  <path d="M856 258.5 l1.5 4 4.3-1-3 3.3 3 3.3-4.3-1-1.5 4-1.5-4-4.3 1 3-3.3-3-3.3 4.3 1z"/>
  <path d="M967 256 V266 L960.5 261 Z"/>
  <path d="M1021.5 256 V266 L1027.5 261 Z"/>
  
  <path d="M1211 245.5 H1226 V248 H1223.5 V256.5 L1233.5 273 Q1235 278 1230 278 H1207 Q1202 278 1203.5 273 L1213.5 256.5 V248 H1211 Z"/>
  <circle cx="1277" cy="274.5" r="1.1"/><circle cx="1281.5" cy="274.5" r="1.1"/><circle cx="1286" cy="274.5" r="1.1"/>
 </g>
 <path d="M1214 262 Q1218.5 265 1223 262 L1222 258 H1215 Z" fill="#404040"/>
</svg>


<div class="a rl" style="left:730px;top:1625px;color:#3a9ad9"><span class="cj">【系统日志】启动主脚本</span>.js</div>
<div class="a rl" style="left:730px;top:1679px;color:#3a9ad9"><span class="cj">【系统日志】</span>Debug<span class="cj">变量清理成功</span></div>
<div class="a rl" style="left:727px;top:1732px"><span class="ts">[2026-03-23 13:25:52]</span> <span class="h0">&nbsp;#0&nbsp;</span> <span class="cj">【</span>String<span class="cj">】</span></div>
<div class="a rl" style="left:727px;top:1812px"><span class="ts">[2026-03-23 13:25:52]</span> <span class="h0">&nbsp;#0&nbsp;</span> <span class="cj">【</span>String<span class="cj">】</span></div>
<div class="a rl" style="left:727px;top:1865px"><span class="ts">[2026-03-23 13:25:52]</span> <span class="h0">&nbsp;#0&nbsp;</span> <span class="cj">【</span>String<span class="cj">】</span></div>
<div class="a rl" style="left:727px;top:1918px"><span class="ts">[2026-03-23 13:25:52]</span> <span class="h0">&nbsp;#0&nbsp;</span> <span class="cj">【</span>String<span class="cj">】</span></div>
<div class="a rl" style="left:727px;top:1971px"><span class="ts">[2026-03-23 13:25:52]</span> <span class="h0">&nbsp;#0&nbsp;</span> <span class="cj">【</span>String<span class="cj">】</span></div>
<!-- box top -->
<svg class="a" style="left:1096px;top:1820px" width="670" height="18" viewBox="0 0 670 18">
 <g fill="none" stroke="#b9c0cc" stroke-width="1.6">
  <path d="M3 17 V3.5 H664.5 V17"/><path d="M7 17 V7.5 H660.5 V17"/>
 </g>
</svg>
<div class="a" style="left:1097px;top:1868px;width:2px;height:24px;background:#b9c0cc"></div><div class="a" style="left:1102px;top:1868px;width:2px;height:24px;background:#b9c0cc"></div>
<div class="a" style="left:1545px;top:1868px;width:2px;height:24px;background:#b9c0cc"></div><div class="a" style="left:1550px;top:1868px;width:2px;height:24px;background:#b9c0cc"></div>
<svg class="a" style="left:1122px;top:1868px" width="26" height="26" viewBox="0 0 26 26"><circle cx="12.5" cy="14" r="10.5" fill="#b9c0cc"/><g stroke="#2d2d2d" stroke-width="1.6"><path d="M4 10 L15 23 M6 6 L20 22 M10 4 L23 17 M3 15 L10 23"/></g><path d="M9 3 Q12 0 15 3" stroke="#b9c0cc" stroke-width="2" fill="none"/></svg>
<div class="a rl" style="left:1156px;top:1865px">AIWROK <span class="cj">屏幕自动化实战案例教学</span></div>
<div class="a" style="left:1097px;top:1921px;width:2px;height:24px;background:#b9c0cc"></div><div class="a" style="left:1102px;top:1921px;width:2px;height:24px;background:#b9c0cc"></div>
<div class="a rl" style="left:1121px;top:1918px"><span class="cj">版本：</span>1.0.0</div>
<div class="a" style="left:1421px;top:1921px;width:2px;height:24px;background:#b9c0cc"></div><div class="a" style="left:1426px;top:1921px;width:2px;height:24px;background:#b9c0cc"></div>
<div class="a" style="left:1097px;top:1974px;width:2px;height:24px;background:#b9c0cc"></div><div class="a" style="left:1102px;top:1974px;width:2px;height:24px;background:#b9c0cc"></div>
<div class="a rl" style="left:1121px;top:1971px">QQ <span class="cj">群：</span>711841924 | <span class="cj">内测群：</span>528816639</div>
<div class="a" style="left:1568px;top:1974px;width:2px;height:24px;background:#b9c0cc"></div><div class="a" style="left:1573px;top:1974px;width:2px;height:24px;background:#b9c0cc"></div>
<!-- splitter dots -->
<div class="a" style="left:681px;top:1551px;width:1841px;height:2px;background-image:linear-gradient(90deg,#111 0 2px,transparent 2px 5px);background-size:5px 2px"></div>
<div class="a" style="left:686px;top:1557px;width:1836px;height:2px;background-image:linear-gradient(90deg,#111 0 2px,transparent 2px 5px);background-size:5px 2px"></div>

<!-- run log header -->
<svg class="a" style="left:702px;top:1565px" width="34" height="33" viewBox="0 0 34 33"><rect x="0.5" y="0.5" width="32.5" height="32" rx="4" fill="#e8e8e8"/><g fill="#444"><rect x="6" y="6" width="3" height="2.5"/><rect x="11" y="6" width="17" height="2.5"/><rect x="6" y="11" width="3" height="2.5"/><rect x="11" y="11" width="17" height="2.5"/><rect x="6" y="16" width="22" height="2" fill="#888"/></g></svg>
<div class="a" style="left:747px;top:1568px;font-size:23px;line-height:30px;color:#d0d0d0">运行日志</div>
<div class="a" style="left:864px;top:1563px;width:235px;height:35px;border:2px solid #555;background:#3c3c3c"></div>
<div class="a" style="left:866px;top:1565px;width:180px;height:31px;background:#2c2c2c"></div>
<svg class="a" style="left:1062px;top:1573px" width="21" height="14"><path d="M1 1.5 H20 L10.5 12.5 Z" fill="#c0c0c0"/></svg>
<div class="a" style="left:865px;top:1566px;font-size:24px;line-height:30px;color:#e0e0e0">全部</div>
<svg class="a" style="left:1133px;top:1563px" width="32" height="35" viewBox="0 0 32 35"><g fill="none" stroke="#3a9ad9" stroke-width="2.4" stroke-linejoin="round"><path d="M13 13 V3.5 Q13 1.5 15.5 1.5 Q18 1.5 18 3.5 V13"/><path d="M4 20 V15.5 Q4 13 7 13 H24 Q27 13 27 15.5 V20 Z"/><path d="M4 20 L1.5 33 H29.5 L27 20"/><path d="M10 26 V33 M16 26 V33 M22 26 V33"/></g></svg>
<svg class="a" style="left:1199px;top:1569px" width="30" height="30" viewBox="0 0 30 30"><g fill="none" stroke="#d8d8d8" stroke-width="2.1" stroke-linecap="round" stroke-linejoin="round"><path d="M10.5 1.6 H4.5 Q0.9 1.6 0.9 5.2 V24.2 Q0.9 27.8 4.5 27.8 H23 Q26.7 27.8 26.7 24.2 V17.6"/><rect x="17.3" y="1.5" width="9.8" height="9.2" rx="3"/><path d="M1.6 26.1 L14 14.4 M6 14.4 H14 V22.3"/></g></svg>

</body></html>
